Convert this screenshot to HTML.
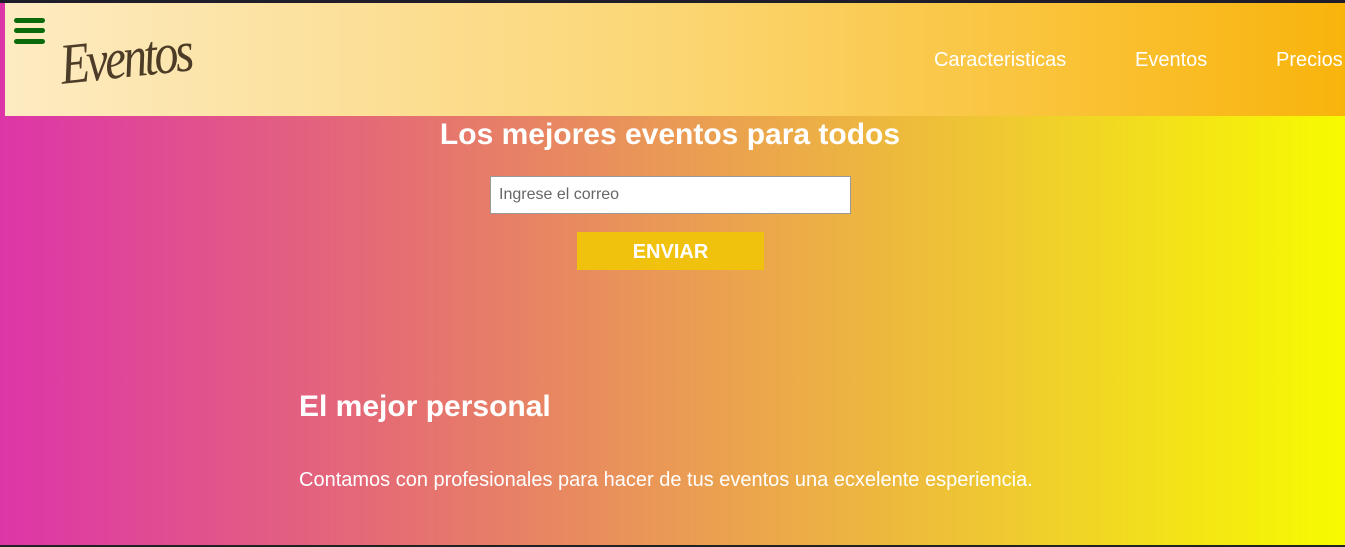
<!DOCTYPE html>
<html><head><style>
html,body{margin:0;padding:0;}
body{width:1345px;height:547px;overflow:hidden;position:relative;background:linear-gradient(90deg,#dd35a8 0%,#e56f72 30%,#ea9a55 50%,#efca30 75%,#f7fb00 100%);font-family:"Liberation Sans",sans-serif;}
.top{position:absolute;left:0;top:0;width:1345px;height:3px;background:#1f1d2a;}
.bot{position:absolute;left:0;top:545px;width:1345px;height:2px;background:#222;}
header{position:absolute;left:5px;top:3px;width:1340px;height:113px;background:linear-gradient(90deg,#fdebc2 0%,#fbd673 50%,#f9b40c 100%);}
.bar{position:absolute;left:9px;width:31px;height:5px;border-radius:3px;background:#0b6a0b;}
.logo{position:absolute;left:55px;top:28px;font-family:"Liberation Serif",serif;font-style:italic;font-size:48px;color:#3a2a18;transform:rotate(-6deg) scaleY(1.2);letter-spacing:-3px;-webkit-text-stroke:0;font-weight:normal;opacity:.9;}
nav a{position:absolute;top:46px;font-size:20px;color:#fff;text-decoration:none;}
h1{position:absolute;left:0;width:1340px;text-align:center;top:118px;margin:0;font-size:30px;color:#fff;}
input{position:absolute;left:490px;top:176px;width:361px;height:38px;box-sizing:border-box;border:1px solid #999;padding:0 8px;font-size:16px;font-family:"Liberation Sans",sans-serif;background:#fff;}
input::placeholder{color:#666;}
.btn{position:absolute;left:577px;top:232px;width:187px;height:38px;background:#f1c20d;color:#fff;font-weight:bold;font-size:20px;text-align:center;line-height:40px;}
h2{position:absolute;left:299px;top:390px;margin:0;font-size:30px;color:#fff;}
p{position:absolute;left:299px;top:469px;margin:0;font-size:20px;color:#fff;}
</style></head><body>
<div class="top"></div>
<header>
<div class="bar" style="top:15px"></div>
<div class="bar" style="top:25px"></div>
<div class="bar" style="top:36px"></div>
<div class="logo">Eventos</div>
<nav><a style="left:929px">Caracteristicas</a><a style="left:1130px">Eventos</a><a style="left:1271px">Precios</a></nav>
</header>
<h1>Los mejores eventos para todos</h1>
<input placeholder="Ingrese el correo">
<div class="btn">ENVIAR</div>
<h2>El mejor personal</h2>
<p>Contamos con profesionales para hacer de tus eventos una ecxelente esperiencia.</p>
<div class="bot"></div>
</body></html>
